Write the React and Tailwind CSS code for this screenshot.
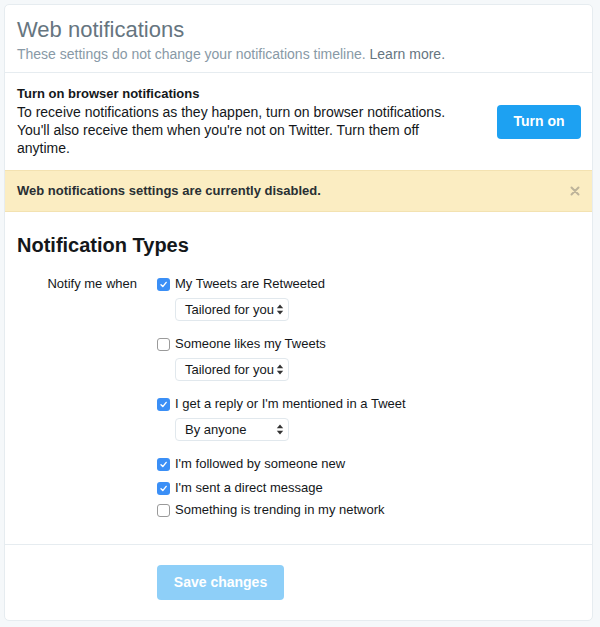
import React from "react";

const font = { fontFamily: '"Liberation Sans", Arial, Helvetica, sans-serif' };

function Check({ checked }) {
  if (checked) {
    return (
      <span className="flex h-[13px] w-[13px] shrink-0 items-center justify-center rounded-[3px] bg-[#3b8ff6]">
        <svg width="9" height="9" viewBox="0 0 9 9" fill="none">
          <path d="M2 4.8 L3.8 6.6 L7.2 2.4" stroke="white" strokeWidth="1.4" strokeLinecap="round" strokeLinejoin="round" />
        </svg>
      </span>
    );
  }
  return <span className="h-[13px] w-[13px] shrink-0 rounded-[3px] border border-[#9a9a9a] bg-white" />;
}

function Select({ label }) {
  return (
    <div className="ml-[18px] mt-[5px] flex h-[23px] w-[114px] items-center justify-between rounded-[4px] border border-[#e1e8ed] bg-white pl-[9px] pr-[4px] text-[13px] text-[#14171a]">
      <span>{label}</span>
      <svg width="8" height="11" viewBox="0 0 8 11">
        <path d="M4 0.5 L7.2 4.3 L0.8 4.3 Z" fill="#333" />
        <path d="M4 10.5 L7.2 6.7 L0.8 6.7 Z" fill="#333" />
      </svg>
    </div>
  );
}

function Row({ checked, text, className = "" }) {
  return (
    <div className={"flex h-[18px] items-center gap-[5px] text-[13px] text-[#14171a] " + className}>
      <Check checked={checked} />
      <span className="whitespace-nowrap">{text}</span>
    </div>
  );
}

export default function App() {
  return (
    <div className="min-h-[627px] w-[600px] bg-[#f5f8fa] pl-[4px] pt-[4px]" style={font}>
      <div className="w-[589px] overflow-hidden rounded-[5px] border border-[#e6ecf0] bg-white">
        {/* Header */}
        <div className="h-[68px] border-b border-[#e6ecf0] px-[12px] pt-[12px]">
          <div className="text-[22px] leading-[26px] text-[#66757f]">Web notifications</div>
          <div className="mt-[2px] text-[14px] leading-[18px] text-[#8899a6]">
            These settings do not change your notifications timeline.{" "}
            <span className="text-[#66757f]">Learn more.</span>
          </div>
        </div>

        {/* Browser notifications */}
        <div className="flex h-[97px] items-center justify-between pl-[12px] pr-[11px]">
          <div className="pb-[2px] pt-[1px]">
            <div className="text-[13px] font-bold leading-[18px] text-[#14171a]">Turn on browser notifications</div>
            <div className="whitespace-nowrap text-[14px] leading-[18px] text-[#14171a]">
              To receive notifications as they happen, turn on browser notifications.
              <br />
              You'll also receive them when you're not on Twitter. Turn them off
              <br />
              anytime.
            </div>
          </div>
          <button className="h-[34px] w-[84px] rounded-[4px] bg-[#1da1f2] text-[14px] font-bold text-white">
            Turn on
          </button>
        </div>

        {/* Alert */}
        <div className="flex h-[42px] items-center justify-between border-y border-[#f3e2b1] bg-[#fbedc2] pl-[12px] pr-[12px]">
          <span className="text-[13px] font-bold text-[#292f33]">Web notifications settings are currently disabled.</span>
          <svg width="10" height="10" viewBox="0 0 10 10">
            <path d="M1.5 1.5 L8.5 8.5 M8.5 1.5 L1.5 8.5" stroke="#bdb39a" strokeWidth="2" strokeLinecap="round" />
          </svg>
        </div>

        {/* Notification types */}
        <div className="border-b border-[#e6ecf0] px-[12px] pb-[25px] pt-[21px]">
          <div className="text-[20px] font-bold leading-[24px] text-[#14171a]">Notification Types</div>
          <div className="mt-[18px] flex">
            <div className="w-[120px] shrink-0 text-right text-[13px] leading-[18px] text-[#14171a]">
              Notify me when
            </div>
            <div className="ml-[20px] flex flex-col">
              <Row checked text="My Tweets are Retweeted" />
              <Select label="Tailored for you" />
              <Row checked={false} text="Someone likes my Tweets" className="mt-[14px]" />
              <Select label="Tailored for you" />
              <Row checked text="I get a reply or I'm mentioned in a Tweet" className="mt-[14px]" />
              <Select label="By anyone" />
              <Row checked text="I'm followed by someone new" className="mt-[14px]" />
              <Row checked text="I'm sent a direct message" className="mt-[6px]" />
              <Row checked={false} text="Something is trending in my network" className="mt-[4px]" />
            </div>
          </div>
        </div>

        {/* Footer */}
        <div className="pb-[20px] pl-[152px] pt-[20px]">
          <button className="h-[35px] w-[127px] rounded-[4px] bg-[#8ecff8] text-[14px] font-bold text-white">
            Save changes
          </button>
        </div>
      </div>
    </div>
  );
}
